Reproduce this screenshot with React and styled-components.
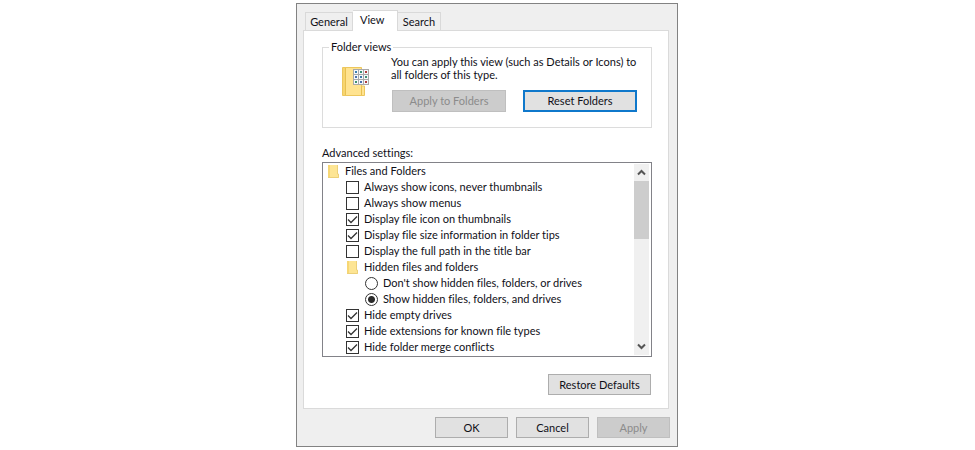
import React, { useState } from "react";
import styled, { createGlobalStyle, css } from "styled-components";

const GlobalStyle = createGlobalStyle`
  * { box-sizing: border-box; }
  body {
    margin: 0;
    background: #fff;
    color: #101018;
    font: 11px/12px Lato, "Liberation Sans", Arial, sans-serif;
    font-variant-ligatures: none;
  }
  button, input { font: inherit; font-variant-ligatures: none; color: inherit; margin: 0; }
`;

const Page = styled.main`
  display: flex;
  justify-content: center;
  padding: 3px 1px 3px 0;
`;

const Dialog = styled.section`
  width: 100%;
  max-width: 382px;
  padding: 6px 7px 8px 6px;
  border: 1px solid #828282;
  background: #efefef;
`;

const TabList = styled.div`
  display: flex;
  align-items: flex-end;
  padding-left: 2px;
`;

const Tab = styled.button`
  min-width: 43px;
  height: 18px;
  padding: 0 4px;
  border: 1px solid #d9d9d9;
  border-bottom: 0;
  background: #efefef;
  white-space: nowrap;

  & + & { border-left: 0; }
  &:first-child { min-width: 48px; }

  ${(p) =>
    p.$active &&
    css`
      min-width: 45px;
      height: 21px;
      padding: 0 7px 2px;
      margin-bottom: -1px;
      position: relative;
      background: #fff;
      text-align: left;
    `}
`;

const Panel = styled.div`
  display: flex;
  flex-direction: column;
  margin-right: 1px;
  padding: 9px 16px 13px 18px;
  border: 1px solid #dadada;
  background: #fff;
`;

const Group = styled.fieldset`
  display: flex;
  gap: 20px;
  min-width: 0;
  margin: 0;
  padding: 1px 14px 15px 19px;
  border: 1px solid #dcdcdc;
`;

const Legend = styled.legend`
  margin-left: -13px;
  padding: 0 2px;
  line-height: 14px;
`;

const GroupIcon = styled.svg`
  flex: none;
  width: 29px;
  height: 32px;
  margin-top: 11px;
`;

const GroupBody = styled.div`
  flex: 1;
  min-width: 0;
`;

const Description = styled.p`
  margin: 0 0 9px;
  line-height: 13px;
`;

const ButtonRow = styled.div`
  display: flex;
  justify-content: flex-end;
  gap: ${(p) => p.$gap}px;
`;

const PanelActions = styled(ButtonRow)`
  padding-right: 1px;
`;

const Button = styled.button`
  width: ${(p) => p.$width}px;
  height: 21px;
  padding: 0;
  border: 1px solid #adadad;
  background: #e1e1e1;
  white-space: nowrap;

  &:disabled {
    border-color: #bfbfbf;
    background: #cccccc;
    color: #8b8b8b;
  }

  ${GroupBody} & { height: 22px; }

  ${(p) => p.$primary && css`border: 2px solid #0f78cb;`}
`;

const ListLabel = styled.div`
  margin: 18px 0 3px;
  line-height: 13px;
`;

const ListBox = styled.div`
  display: flex;
  margin-bottom: 17px;
  border: 1px solid #828288;
`;

const Tree = styled.ul`
  flex: 1;
  min-width: 0;
  margin: 0;
  padding: 0 0 1px 4px;
  list-style: none;
`;

const Row = styled.li`
  height: 16px;
  padding-left: ${(p) => p.$level * 19}px;
`;

const RowLabel = styled.label`
  display: flex;
  align-items: center;
  gap: 5px;
  height: 16px;
  line-height: 14px;
  white-space: nowrap;
`;

const FolderSvg = styled.svg`
  width: 13px;
  height: 13px;
`;

const Tick = styled.input`
  appearance: none;
  width: 13px;
  height: 13px;
  border: 1px solid #333;
  background: #fff;

  &[type="radio"] { border-radius: 50%; }
  &[type="checkbox"]:checked {
    background: url("data:image/svg+xml,%3Csvg xmlns='http://www.w3.org/2000/svg' viewBox='0 0 11 11'%3E%3Cpath d='M1 5.500 4 8.500 10 2.500' fill='none' stroke='%23333' stroke-width='1.3'/%3E%3C/svg%3E") center / 11px 11px;
  }
  &[type="radio"]:checked {
    background: radial-gradient(circle, #2b2b2b 3px, #fff 4px);
  }
`;

const ScrollBar = styled.div`
  display: flex;
  flex-direction: column;
  width: 15px;
  margin: 1px 2px;
  background: #f0f0f0;
`;

const ScrollButton = styled.button`
  display: flex;
  align-items: center;
  justify-content: center;
  height: 17px;
  padding: 0;
  border: 0;
  background: #f0f0f0;
`;

const ScrollTrack = styled.div`
  flex: 1;
`;

const ScrollThumb = styled.div`
  height: 58px;
  background: #cdcdcd;
`;

const Footer = styled.footer`
  margin-top: 8px;
`;

function Folder() {
  return (
    <FolderSvg viewBox="0 0 13 13" aria-hidden="true">
      <path d="M1 0h10v9h1v4H1z" fill="#fde594" />
      <path d="M1 0h2v13H1z" fill="#f7d774" />
      <path d="M10.500 0v9h1v3.500H1" fill="none" stroke="#ecd079" />
    </FolderSvg>
  );
}

function FolderWithGrid() {
  const dots = ["#3a7fae", "#3c8f77", "#b23c3c", "#4b70ac", "#3b77a8", "#3f8f75", "#3d9170", "#4b70ac", "#b23c3c"];
  return (
    <GroupIcon viewBox="0 0 29 32" aria-hidden="true">
      <path d="M.5 1.500h19V20h3v9.500H.5z" fill="#ffe390" stroke="#edc75d" />
      <path d="M1 2h2v27H1z" fill="#f7d56f" />
      <path d="M3.500 2v27M19.500 20v9" stroke="#e8c051" />
      <path d="M11 3h16v16H11z" fill="#a9a9a9" />
      {dots.map((color, i) => {
        const x = 12 + (i % 3) * 5;
        const y = 4 + Math.floor(i / 3) * 5;
        return (
          <g key={i}>
            <path d={`M${x} ${y}h4v4h-4z`} fill="#f6f8fa" />
            <path d={`M${x + 1} ${y + 1}h2v2h-2z`} fill={color} />
          </g>
        );
      })}
    </GroupIcon>
  );
}

function Arrow({ down }) {
  return (
    <svg width="9" height="7" viewBox="0 0 9 7" aria-hidden="true">
      <path d={down ? "M1 1.500 4.500 5 8 1.500" : "M1 5.500 4.500 2 8 5.500"} fill="none" stroke="#555" strokeWidth="2" />
    </svg>
  );
}

const settings = [
  { kind: "folder", level: 0, text: "Files and Folders" },
  { kind: "checkbox", level: 1, text: "Always show icons, never thumbnails" },
  { kind: "checkbox", level: 1, text: "Always show menus" },
  { kind: "checkbox", level: 1, text: "Display file icon on thumbnails", on: true },
  { kind: "checkbox", level: 1, text: "Display file size information in folder tips", on: true },
  { kind: "checkbox", level: 1, text: "Display the full path in the title bar" },
  { kind: "folder", level: 1, text: "Hidden files and folders" },
  { kind: "radio", level: 2, text: "Don't show hidden files, folders, or drives" },
  { kind: "radio", level: 2, text: "Show hidden files, folders, and drives", on: true },
  { kind: "checkbox", level: 1, text: "Hide empty drives", on: true },
  { kind: "checkbox", level: 1, text: "Hide extensions for known file types", on: true },
  { kind: "checkbox", level: 1, text: "Hide folder merge conflicts", on: true },
];

export default function App() {
  const [tab, setTab] = useState("View");
  return (
    <Page>
      <GlobalStyle />
      <Dialog role="dialog" aria-label="Folder Options">
        <TabList role="tablist">
          {["General", "View", "Search"].map((name) => (
            <Tab key={name} role="tab" aria-selected={tab === name} $active={tab === name} onClick={() => setTab(name)}>
              {name}
            </Tab>
          ))}
        </TabList>
        <Panel role="tabpanel">
          <Group>
            <Legend>Folder views</Legend>
            <FolderWithGrid />
            <GroupBody>
              <Description>
                You can apply this view (such as Details or Icons) to all folders of this type.
              </Description>
              <ButtonRow $gap={17}>
                <Button $width={114} disabled>Apply to Folders</Button>
                <Button $width={114} $primary>Reset Folders</Button>
              </ButtonRow>
            </GroupBody>
          </Group>
          <ListLabel id="advanced">Advanced settings:</ListLabel>
          <ListBox>
            <Tree aria-labelledby="advanced">
              {settings.map(({ kind, level, text, on }) => (
                <Row key={text} $level={level}>
                  {kind === "folder" ? (
                    <RowLabel as="span"><Folder />{text}</RowLabel>
                  ) : (
                    <RowLabel>
                      <Tick type={kind} name={kind === "radio" ? "hidden-files" : undefined} defaultChecked={on} />
                      {text}
                    </RowLabel>
                  )}
                </Row>
              ))}
            </Tree>
            <ScrollBar>
              <ScrollButton aria-label="Scroll up"><Arrow /></ScrollButton>
              <ScrollTrack><ScrollThumb /></ScrollTrack>
              <ScrollButton aria-label="Scroll down"><Arrow down /></ScrollButton>
            </ScrollBar>
          </ListBox>
          <PanelActions $gap={0}>
            <Button $width={103}>Restore Defaults</Button>
          </PanelActions>
        </Panel>
        <Footer>
          <ButtonRow $gap={8}>
            <Button $width={73}>OK</Button>
            <Button $width={73}>Cancel</Button>
            <Button $width={73} disabled>Apply</Button>
          </ButtonRow>
        </Footer>
      </Dialog>
    </Page>
  );
}
